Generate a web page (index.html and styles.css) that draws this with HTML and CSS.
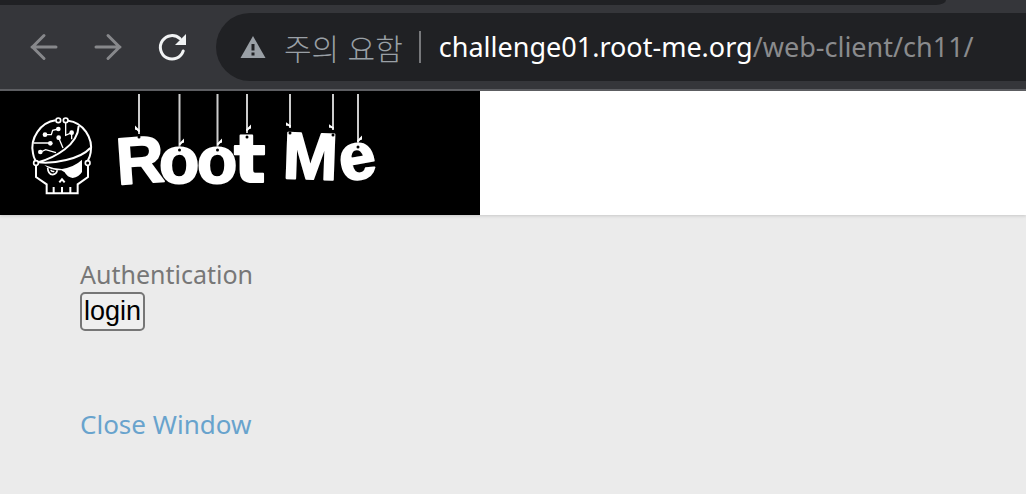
FILE: index.html
```
<!DOCTYPE html>
<html lang="ko">
<head>
    <meta charset="UTF-8">
    <title>Root Me - Authentication</title>
    <link rel="stylesheet" href="styles.css">
</head>
<body>
    <!-- Browser chrome -->
    <div class="browser">
        <div class="tab-strip"></div>
        <div class="toolbar">
            <button class="nav-btn" type="button" aria-label="Back">
                <svg width="32" height="32" viewBox="0 0 32 32"><path d="M28 16H4M16 4.500L4.500 16L16 27.500"/></svg>
            </button>
            <button class="nav-btn" type="button" aria-label="Forward">
                <svg width="32" height="32" viewBox="0 0 32 32"><path d="M4 16H28M16 4.500L27.500 16L16 27.500"/></svg>
            </button>
            <button class="nav-btn reload" type="button" aria-label="Reload">
                <svg width="32" height="32" viewBox="0 0 32 32"><path d="M27.200 20A11.700 11.700 0 1 1 24 7.700"/><path class="tip" d="M30 3V14H19Z"/></svg>
            </button>
            <div class="address-bar">
                <svg class="warning" width="26" height="24" viewBox="0 0 26 24"><path d="M13 1L25.500 23H.5Z" fill="#9aa0a6"/><path d="M13 9V15.500M13 17.500V20.500" stroke="#202124" stroke-width="3"/></svg>
                <span class="notice">주의 요함</span>
                <span class="url"><span class="host">challenge01.root-me.org</span>/web-client/ch11/</span>
            </div>
        </div>
    </div>

    <header class="site-header">
        <div class="banner">
            <svg class="logo" width="480" height="124" viewBox="0 0 480 124" role="img" aria-label="Root Me">
                <!-- Skull -->
                <g class="skull" transform="translate(20 -1) scale(.3333)">
                    <path d="M107 91C62 97 29 144 39 190Q41 202 46 211M144 92C190 97 220 145 212 188Q210 200 204 211" stroke-width="6"/>
                    <path d="M176 108C174 166 105 202 55 217M55 217C101 222 180 208 211 174" stroke-width="6"/>
                    <circle cx="115" cy="91" r="7" stroke-width="5"/>
                    <circle cx="137" cy="91" r="7" stroke-width="5"/>
                    <circle cx="48" cy="219" r="7" stroke-width="5"/>
                    <circle cx="203" cy="219" r="7" stroke-width="5"/>
                    <path d="M137 98V136L155 128M76 134H94L98 121L115 117M40 159H91M62 186L77 179L108 188M116 143L129 174M155 128V148" stroke-width="4"/>
                    <g class="solid">
                        <circle cx="115" cy="117" r="7"/>
                        <circle cx="155" cy="128" r="7"/>
                        <circle cx="75" cy="134" r="7"/>
                        <circle cx="116" cy="143" r="7"/>
                        <circle cx="91" cy="160" r="7"/>
                        <circle cx="61" cy="186" r="7"/>
                        <path d="M73 225Q99 236 126 237Q164 230 186 209V246Q177 261 158 264Q142 262 134 247L124 241H111Q88 238 73 225Z"/>
                    </g>
                    <path d="M83 233Q84 253 98 254Q109 253 112 241" stroke-width="5"/>
                    <path d="M92 239Q95 246 103 244" stroke-width="4"/>
                    <path d="M48 227V261L80 283V310H173V283L204 261V227M101 291V308M126 291V308M151 291V308" stroke-width="6"/>
                    <path d="M118 277L126 268L134 277" stroke-width="6"/>
                </g>
                <!-- Hanging letters -->
                <g class="letters">
                    <text x="116" y="92" transform="rotate(-4 139 67)">R</text>
                    <text x="159" y="92">o</text>
                    <text x="197" y="92">o</text>
                    <text class="wide" x="234" y="91">t</text>
                    <text x="283" y="88" transform="rotate(2 310 64)">M</text>
                    <text x="339" y="88" transform="rotate(-10 358 70)">e</text>
                </g>
                <path class="strings" d="M139 3V43M179.500 3V56M217.500 3V56M247 3V42M290 3V37M333 3V39M358 3V52"/>
                <path class="knots" d="M139 40L136 37V38M180 53L183 50V51M218 53L221 50V51M247 39L250 36V37M290 35L287 33V34M333 37L330 35V36M358 50L361 47V48"/>
                <g class="holes">
                    <circle cx="139" cy="46" r="1.500"/>
                    <circle cx="179.500" cy="59" r="1.500"/>
                    <circle cx="217.500" cy="59" r="1.500"/>
                    <circle cx="247" cy="46" r="1.500"/>
                    <circle cx="290" cy="42" r="1.500"/>
                    <circle cx="333" cy="44" r="1.500"/>
                    <circle cx="358" cy="56" r="1.500"/>
                </g>
            </svg>
        </div>
    </header>

    <main>
        <form onsubmit="return false">
            <div class="title">Authentication</div>
            <button class="login" type="submit">login</button>
        </form>
        <a class="close" href="#">Close Window</a>
    </main>
</body>
</html>
```
FILE: styles.css
```
* {
    box-sizing: border-box;
}
body {
    margin: 0;
    min-height: 100vh;
    background: #ebebeb;
    color: #777;
    font-family: "Noto Sans", "Noto Sans CJK KR", sans-serif;
    font-size: 25px;
    line-height: 34px;
}
button {
    margin: 0;
    font: inherit;
}
.browser {
    background: #35363a;
    border-bottom: 2px solid #5f6064;
}
.tab-strip {
    height: 5px;
    margin-right: 80px;
    background: #202124;
    border-bottom-right-radius: 10px 5px;
}
.toolbar {
    display: flex;
    align-items: center;
    gap: 32px;
    padding: 8px 0 8px 28px;
}
.nav-btn {
    display: flex;
    flex: none;
    padding: 0;
    border: none;
    background: none;
}
.nav-btn path {
    fill: none;
    stroke: #87888b;
    stroke-width: 3;
    stroke-linecap: round;
}
.nav-btn.reload path {
    stroke: #f1f3f4;
}
.nav-btn.reload .tip {
    fill: #f1f3f4;
    stroke: none;
}
.address-bar {
    flex: 1;
    display: flex;
    align-items: center;
    height: 68px;
    margin-left: -4px;
    padding-left: 24px;
    background: #202124;
    border-radius: 34px 0 0 34px;
    color: #8a8b8d;
    font-size: 27px;
    white-space: nowrap;
}
.warning {
    flex: none;
    margin-right: 18px;
}
.notice {
    padding-right: 16px;
    margin-right: 18px;
    border-right: 2px solid #77787b;
    color: #9aa0a6;
    font-family: "Noto Sans CJK KR", sans-serif;
    font-size: 30px;
    font-weight: 300;
    line-height: 32px;
}
.host {
    color: #fff;
}
.site-header {
    background: #fff;
    box-shadow: 0 1px 3px rgba(0,0,0,0.15);
}
.banner {
    width: 480px;
    max-width: 100%;
    background: #000;
}
.logo {
    display: block;
    max-width: 100%;
}
.skull {
    fill: none;
    stroke: #fff;
}
.skull .solid {
    fill: #fff;
    stroke: none;
}
.letters {
    fill: #fff;
    stroke: #fff;
    stroke-width: 2;
    stroke-linejoin: round;
    font-family: "Liberation Sans", sans-serif;
    font-size: 66px;
    font-weight: bold;
}
.letters .wide {
    font-family: "DejaVu Sans", sans-serif;
}
.strings {
    stroke: #ccc;
    stroke-width: 2;
}
.knots {
    fill: none;
    stroke: #fff;
    stroke-width: 2;
    stroke-linecap: round;
}
main {
    padding: 42px 80px;
}
.login {
    display: block;
    padding: 0 2px;
    border: 2px solid #767676;
    border-radius: 5px;
    background: #efefef;
    color: #000;
    font-family: "Liberation Sans", sans-serif;
    font-size: 27px;
    line-height: 35px;
}
.title {
    padding-bottom: 1px;
}
.close {
    display: inline-block;
    margin-top: 76px;
    color: #68a3cd;
    font-size: 26px;
    text-decoration: none;
}
```
